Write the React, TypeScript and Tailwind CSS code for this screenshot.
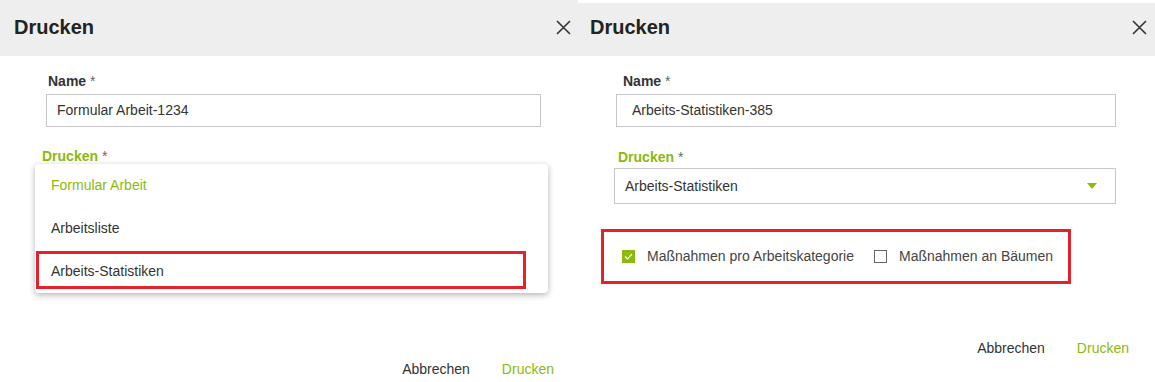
import React from 'react';

const GREEN = 'text-[#8cba0c]';

const CloseIcon = () => (
    <svg width="15" height="15" viewBox="0 0 15 15" className="text-[#333]">
        <path d="M1 1 L14 14 M14 1 L1 14" stroke="currentColor" strokeWidth="1.6" />
    </svg>
);

const Header = ({ pl, pr, h, pb }: { pl: string, pr: string, h: string, pb: string }) => (
    <div className={`flex items-center justify-between bg-[#eeeeee] ${h} ${pl} ${pr} ${pb}`}>
        <h2 className="text-[20px] font-bold text-[#222]">Drucken</h2>
        <CloseIcon />
    </div>
);

const Label = ({ text, green, className }: { text: string, green?: boolean, className?: string }) => (
    <div className={`text-[14px] leading-[16px] font-bold ${className ?? ''}`}>
        <span className={green ? GREEN : 'text-[#333]'}>{text}</span>
        <span className="text-[#666] font-normal"> *</span>
    </div>
);

const Footer = ({ className }: { className: string }) => (
    <div className={`flex justify-end gap-[32px] text-[14px] leading-[16px] ${className}`}>
        <button className="text-[#333]">Abbrechen</button>
        <button className={GREEN}>Drucken</button>
    </div>
);

const Checkbox = ({ checked, label }: { checked: boolean, label: string }) => (
    <label className="flex items-center gap-[12px] text-[14px] text-[#444]">
        {checked ? (
            <span className="w-[13px] h-[13px] bg-[#8cba0c] flex items-center justify-center">
                <svg width="9" height="9" viewBox="0 0 9 9">
                    <path d="M1 4.5 L3.5 7 L8 2" stroke="white" strokeWidth="1.2" fill="none" />
                </svg>
            </span>
        ) : (
            <span className="w-[13px] h-[13px] border border-[#666] bg-white" />
        )}
        {label}
    </label>
);

export default function App() {
    return (
        <div className="flex w-[1155px] h-[382px] bg-white overflow-hidden" style={{ fontFamily: '"Liberation Sans", Arial, sans-serif' }}>
            {/* Left: open dropdown */}
            <div className="w-[578px] h-[382px] flex flex-col">
                <Header h="h-[56px]" pl="pl-[14px]" pr="pr-[7px]" pb="pb-[2px]" />
                <div className="relative flex-1 flex flex-col pl-[46px] pr-[37px] pt-[17px]">
                    <Label text="Name" className="ml-[2px]" />
                    <div className="mt-[5px] h-[33px] border border-[#c6c6cc] flex items-center px-[10px] text-[14px] text-[#333]">
                        Formular Arbeit-1234
                    </div>
                    <Label text="Drucken" green className="mt-[21px] ml-[-4px]" />
                    <div className="mt-[3px] h-[36px] border border-[#c6c6cc]" />

                    <div className="absolute left-[35px] top-[108px] w-[513px] bg-white rounded-[4px] shadow-[0_2px_6px_rgba(0,0,0,0.3)] text-[14px]">
                        <div className={`h-[43px] flex items-center pl-[16px] ${GREEN}`}>Formular Arbeit</div>
                        <div className="h-[43px] flex items-center pl-[16px] text-[#333]">Arbeitsliste</div>
                        <div className="relative h-[43px] flex items-center pl-[16px] text-[#333]">
                            Arbeits-Statistiken
                            <div className="absolute left-[1px] top-[1px] w-[490px] h-[38px] border-[3px] border-[#e4222a]" />
                        </div>
                    </div>

                    <Footer className="mt-auto pb-[5px] mr-[-13px]" />
                </div>
            </div>

            {/* Right: selection made */}
            <div className="w-[577px] h-[379px] mt-[3px] flex flex-col">
                <Header h="h-[53px]" pl="pl-[12px]" pr="pr-[8px]" pb="pb-[5px]" />
                <div className="flex-1 flex flex-col pl-[38px] pr-[39px] pt-[17px]">
                    <Label text="Name" className="ml-[7px]" />
                    <div className="mt-[5px] h-[33px] border border-[#c6c6cc] flex items-center px-[15px] text-[14px] text-[#333]">
                        Arbeits-Statistiken-385
                    </div>
                    <Label text="Drucken" green className="mt-[22px] ml-[2px]" />
                    <div className="mt-[3px] ml-[-2px] h-[36px] border border-[#c6c6cc] flex items-center justify-between pl-[10px] pr-[18px] text-[14px] text-[#333]">
                        Arbeits-Statistiken
                        <svg width="10" height="6" viewBox="0 0 10 6">
                            <path d="M0 0 L10 0 L5 6 Z" fill="#8cba0c" />
                        </svg>
                    </div>
                    <div className="mt-[25px] ml-[-15px] w-[470px] h-[55px] border-[3px] border-[#e4222a] flex items-center gap-[20px] pl-[18px]">
                        <Checkbox checked label="Maßnahmen pro Arbeitskategorie" />
                        <Checkbox checked={false} label="Maßnahmen an Bäumen" />
                    </div>
                    <Footer className="mt-[56px] mr-[-13px]" />
                </div>
            </div>
        </div>
    );
}
